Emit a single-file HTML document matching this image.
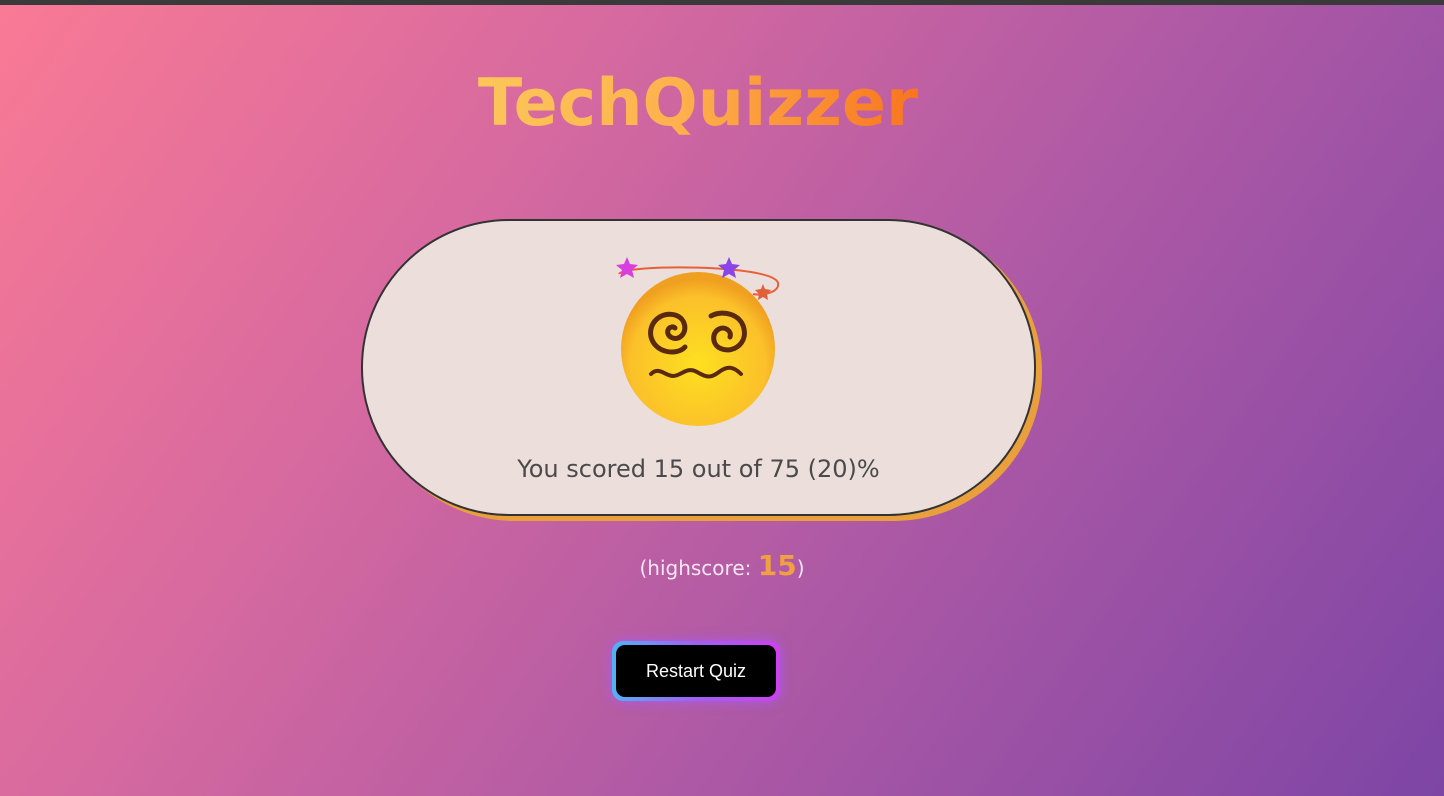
<!DOCTYPE html>
<html><head><style>
html,body{margin:0;padding:0}
body{width:1444px;height:796px;overflow:hidden;position:relative;font-family:"Liberation Sans",sans-serif;
background:linear-gradient(125deg,#f97a95 0%,#d86a9f 30%,#b05aa5 60%,#7d45a5 100%);}
.top{position:absolute;left:0;top:0;width:1444px;height:5px;background:#3a3a3a}
h1{position:absolute;left:458px;width:480px;top:66px;margin:0;text-align:center;font-family:"DejaVu Sans",sans-serif;font-weight:bold;font-size:65px;
background:linear-gradient(90deg,#fcc85a 0%,#fdb24e 45%,#f8701a 100%);-webkit-background-clip:text;background-clip:text;color:transparent}
.card{position:absolute;left:361px;top:219px;width:671px;height:293px;border:2px solid #333;border-radius:148px;background:#ecdeda;box-shadow:6px 5px 0 #e9a03c}
.score{position:absolute;left:0;width:100%;top:234px;text-align:center;color:#4a4a4a;font-family:"DejaVu Sans",sans-serif;font-size:24px}
.hs{position:absolute;left:0;width:1444px;top:549px;text-align:center;color:#f6e6f2;font-size:20px;font-family:"DejaVu Sans",sans-serif}
.hs b{color:#f0a040;font-size:28px}
.btn{position:absolute;left:612px;top:641px;width:168px;height:60px;border-radius:11px;background:linear-gradient(90deg,#4fb3f5,#a060f5,#d040f0);box-shadow:0 0 12px rgba(170,90,255,.8)}
.btn div{position:absolute;left:4px;top:4px;right:4px;bottom:4px;background:#000;border-radius:9px;color:#fff;font-size:18px;text-align:center;line-height:52px}
</style></head><body>
<div class="top"></div>
<h1>TechQuizzer</h1>
<div class="card">
<svg style="position:absolute;left:250px;top:35px" width="175" height="175" viewBox="0 0 175 175">
<defs><radialGradient id="g" cx="50%" cy="60%" r="55%"><stop offset="0" stop-color="#fde020"/><stop offset="0.8" stop-color="#fbc02a"/><stop offset="1" stop-color="#f0a020"/></radialGradient></defs>
<circle cx="85" cy="93" r="77" fill="url(#g)"/>
<path d="M6 18C10 8 160 8 165 27C167 36 150 40 140 38" fill="none" stroke="#e8603a" stroke-width="2"/>
<path d="M14 1l3 7 8 1-6 5 2 8-7-4-7 4 2-8-6-5 8-1z" fill="#d83ee0"/>
<path d="M116 1l3 7 8 1-6 5 2 8-7-4-7 4 2-8-6-5 8-1z" fill="#8a44e8"/>
<path d="M150 28l2 5 6 1-4 4 1 6-5-3-5 3 1-6-4-4 6-1z" fill="#e0603a"/>
<g fill="none" stroke="#5a2a10" stroke-width="5" stroke-linecap="round">
<path d="M72 91c-8 9-30 6-34-10c-3-14 10-26 24-22c11 3 13 17 5 22c-6 4-14-1-12-7c1-3 5-4 7-2"/>
<path d="M98 60c10-6 30-3 33 13c3 14-10 24-22 20c-10-3-11-16-3-20c6-3 13 2 11 8"/>
<path d="M38 118c8-8 14 2 22 2s14-10 24-4s14 6 22 0s14-6 22 2" stroke-width="4"/>
</g>
</svg>
<div class="score">You scored 15 out of 75 (20)%</div>
</div>
<div class="hs">(highscore: <b>15</b>)</div>
<div class="btn"><div>Restart Quiz</div></div>
</body></html>
